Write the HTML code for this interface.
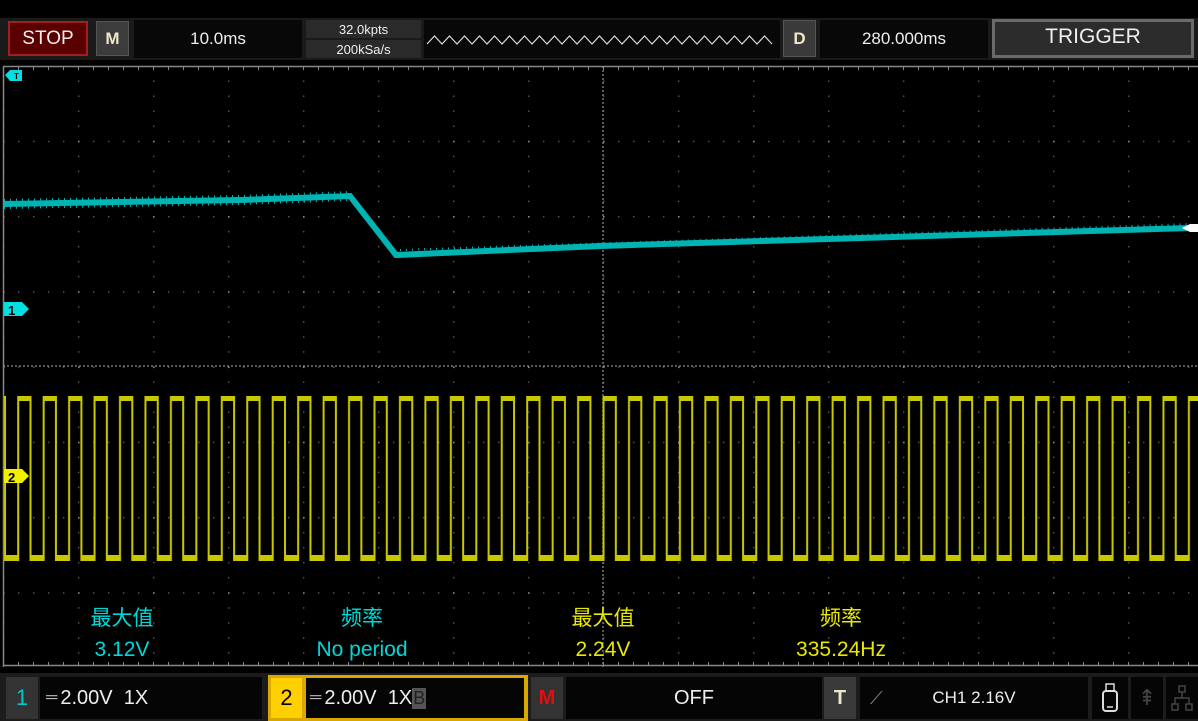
<!DOCTYPE html>
<html><head><meta charset="utf-8"><style>
body{margin:0;width:1198px;height:721px;background:#000;overflow:hidden;font-family:"Liberation Sans","Noto Sans CJK SC",sans-serif;}
svg{position:absolute;left:0;top:0}
.b{position:absolute;box-sizing:border-box;display:flex;align-items:center;justify-content:center;color:#eee;}
</style></head><body>
<svg width="1198" height="721">
<defs>
<pattern id="g" patternUnits="userSpaceOnUse" x="3" y="65.5" width="75" height="75.25">
<rect x="0" y="0" width="1.6" height="1.6" fill="#8a8a8a"/>
<rect x="15" y="0" width="1.4" height="1.4" fill="#5a5a5a"/><rect x="30" y="0" width="1.4" height="1.4" fill="#5a5a5a"/><rect x="45" y="0" width="1.4" height="1.4" fill="#5a5a5a"/><rect x="60" y="0" width="1.4" height="1.4" fill="#5a5a5a"/>
<rect x="0" y="15" width="1.4" height="1.4" fill="#5a5a5a"/><rect x="0" y="30" width="1.4" height="1.4" fill="#5a5a5a"/><rect x="0" y="45" width="1.4" height="1.4" fill="#5a5a5a"/><rect x="0" y="60" width="1.4" height="1.4" fill="#5a5a5a"/>
</pattern>
<pattern id="sq" patternUnits="userSpaceOnUse" x="18" y="0" width="25.45" height="721">
<rect x="0" y="396" width="12.5" height="5" fill="#c8c800"/>
<rect x="12.5" y="555" width="13" height="6" fill="#c8c800"/>
<rect x="-0.8" y="396" width="2" height="165" fill="#c8c800"/>
<rect x="24.65" y="396" width="2" height="165" fill="#c8c800"/>
<rect x="11.5" y="396" width="2" height="165" fill="#c8c800"/>
</pattern>
<pattern id="tk" patternUnits="userSpaceOnUse" x="3" y="0" width="15" height="721">
<rect x="0" y="66" width="1" height="4" fill="#888"/>
<rect x="0" y="662" width="1" height="4" fill="#888"/>
</pattern>
</defs>
<rect x="3" y="66" width="1195" height="601" fill="url(#g)"/>
<line x1="3" y1="366" x2="1198" y2="366" stroke="#777" stroke-width="1.5" stroke-dasharray="2,2"/>
<line x1="603" y1="66" x2="603" y2="667" stroke="#777" stroke-width="1.5" stroke-dasharray="2,2"/>
<rect x="3" y="0" width="1195" height="721" fill="url(#tk)"/>
<line x1="3" y1="66.5" x2="1198" y2="66.5" stroke="#888" stroke-width="1.5"/>
<line x1="3" y1="665.5" x2="1198" y2="665.5" stroke="#888" stroke-width="1.5"/>
<line x1="3.5" y1="66" x2="3.5" y2="667" stroke="#888" stroke-width="1.5"/>
<rect x="4" y="380" width="1194" height="190" fill="url(#sq)"/>
<rect x="4" y="555" width="14" height="6" fill="#c8c800"/>
<path d="M4,204 L240,200 L350,196 L396,255 L600,246 L1190,228" stroke="#00b4b4" stroke-width="6" fill="none"/>
<path d="M4,200 L240,196 L350,192 M4,208 L240,204 L350,200 M400,250 L1190,224" stroke="#00b4b4" stroke-width="2" fill="none" stroke-dasharray="1,5"/>
<path d="M1182,228 l8,-4 l8,0 l0,8 l-8,0 z" fill="#fff"/>
<path d="M5,75 l5,-5 h12 v11 h-12 z" fill="#00e0e0"/><text x="14" y="79" font-size="8" font-weight="bold" fill="#000">T</text>
<path d="M4,302 h18 l7,7 l-7,7 h-18 z" fill="#00e0e0"/><text x="8" y="315" font-size="13" font-weight="bold" fill="#000">1</text>
<path d="M4,469 h18 l7,7 l-7,7 h-18 z" fill="#f0f000"/><text x="8" y="482" font-size="13" font-weight="bold" fill="#000">2</text>
<g font-size="21" text-anchor="middle" font-family="Liberation Sans,Noto Sans CJK SC,sans-serif">
<text x="122" y="625" fill="#00d8d8">最大值</text><text x="122" y="656" fill="#00d8d8">3.12V</text>
<text x="362" y="625" fill="#00d8d8">频率</text><text x="362" y="656" fill="#00d8d8">No period</text>
<text x="603" y="625" fill="#e8e800">最大值</text><text x="603" y="656" fill="#e8e800">2.24V</text>
<text x="841" y="625" fill="#e8e800">频率</text><text x="841" y="656" fill="#e8e800">335.24Hz</text>
</g>
</svg>
<!-- top bar -->
<div class="b" style="left:0;top:18px;width:1198px;height:42px;background:#1a1a1a;"></div>
<div class="b" style="left:8px;top:21px;width:80px;height:35px;background:#5a0000;border:2px solid #a02020;font-size:19px;">STOP</div>
<div class="b" style="left:96px;top:21px;width:33px;height:35px;background:#3c3c3c;border:1px solid #555;font-size:17px;font-weight:bold;color:#eee8c8;">M</div>
<div class="b" style="left:134px;top:20px;width:168px;height:38px;background:#080808;font-size:17px;">10.0ms</div>
<div class="b" style="left:306px;top:20px;width:115px;height:18px;background:#2a2a2a;font-size:13px;">32.0kpts</div>
<div class="b" style="left:306px;top:40px;width:115px;height:18px;background:#2a2a2a;font-size:13px;">200kSa/s</div>
<div class="b" style="left:424px;top:20px;width:356px;height:38px;background:#080808;"></div>
<svg style="left:424px;top:20px" width="356" height="38"><path d="M3,24 l7.5,-8 l7.5,8 l7.5,-8 l7.5,8 l7.5,-8 l7.5,8 l7.5,-8 l7.5,8 l7.5,-8 l7.5,8 l7.5,-8 l7.5,8 l7.5,-8 l7.5,8 l7.5,-8 l7.5,8 l7.5,-8 l7.5,8 l7.5,-8 l7.5,8 l7.5,-8 l7.5,8 l7.5,-8 l7.5,8 l7.5,-8 l7.5,8 l7.5,-8 l7.5,8 l7.5,-8 l7.5,8 l7.5,-8 l7.5,8 l7.5,-8 l7.5,8 l7.5,-8 l7.5,8 l7.5,-8 l7.5,8 l7.5,-8 l7.5,8 l7.5,-8 l7.5,8 l7.5,-8 l7.5,8 l7.5,-8 l7.5,8" stroke="#ddd" stroke-width="1.2" fill="none"/></svg>
<div class="b" style="left:783px;top:20px;width:33px;height:37px;background:#3a3a3a;border:1px solid #555;font-size:17px;font-weight:bold;color:#eee8c8;">D</div>
<div class="b" style="left:820px;top:20px;width:168px;height:38px;background:#080808;font-size:17px;">280.000ms</div>
<div class="b" style="left:992px;top:19px;width:202px;height:39px;background:#2c2c2c;border:3px solid #6a6a6a;font-size:21px;padding-bottom:4px;">TRIGGER</div>
<!-- bottom bar -->
<div class="b" style="left:0;top:673px;width:1198px;height:48px;background:#1c1c1c;"></div>
<div class="b" style="left:6px;top:677px;width:32px;height:42px;background:#333;font-size:22px;color:#00c8c8;">1</div>
<div class="b" style="left:40px;top:677px;width:222px;height:42px;background:#050505;font-size:20px;justify-content:flex-start;padding-left:6px;"><span style="color:#bbb;font-size:16px;margin-right:3px">═</span>2.00V&nbsp;&nbsp;1X</div>
<div class="b" style="left:268px;top:675px;width:260px;height:46px;background:#d8a800;"></div>
<div class="b" style="left:271px;top:678px;width:31px;height:40px;background:#ffd000;font-size:22px;color:#000;">2</div>
<div class="b" style="left:306px;top:678px;width:218px;height:40px;background:#050505;font-size:20px;justify-content:flex-start;padding-left:4px;"><span style="color:#bbb;font-size:16px;margin-right:3px">═</span>2.00V&nbsp;&nbsp;1X<span style="background:#555;color:#222;font-size:18px;padding:0 1px;">B</span></div>
<div class="b" style="left:531px;top:677px;width:32px;height:42px;background:#333;font-size:20px;font-weight:bold;color:#e01010;">M</div>
<div class="b" style="left:566px;top:677px;width:256px;height:42px;background:#050505;font-size:20px;">OFF</div>
<div class="b" style="left:824px;top:677px;width:32px;height:42px;background:#3a3a3a;font-size:20px;font-weight:bold;color:#eee8c8;">T</div>
<div class="b" style="left:860px;top:677px;width:228px;height:42px;background:#050505;font-size:17px;"><span style="position:absolute;left:10px;color:#888;font-size:18px;">⟋</span>CH1 2.16V</div>
<div class="b" style="left:1092px;top:677px;width:36px;height:42px;background:#050505;"><svg width="20" height="30" style="position:static"><rect x="6" y="1" width="8" height="7" fill="none" stroke="#ddd" stroke-width="1.5"/><rect x="3" y="8" width="14" height="20" rx="3" fill="none" stroke="#ddd" stroke-width="2"/><line x1="7" y1="24" x2="13" y2="24" stroke="#ddd" stroke-width="1.5"/></svg></div>
<div class="b" style="left:1131px;top:677px;width:32px;height:42px;background:#050505;color:#444;font-size:22px;">⇞</div>
<div class="b" style="left:1166px;top:677px;width:32px;height:42px;background:#050505;"><svg width="24" height="28" style="position:static" fill="none" stroke="#444" stroke-width="1.5"><rect x="9" y="2" width="6" height="6"/><rect x="2" y="20" width="6" height="6"/><rect x="16" y="20" width="6" height="6"/><path d="M12,8 V14 M5,20 V14 H19 V20"/></svg></div>
</body></html>
